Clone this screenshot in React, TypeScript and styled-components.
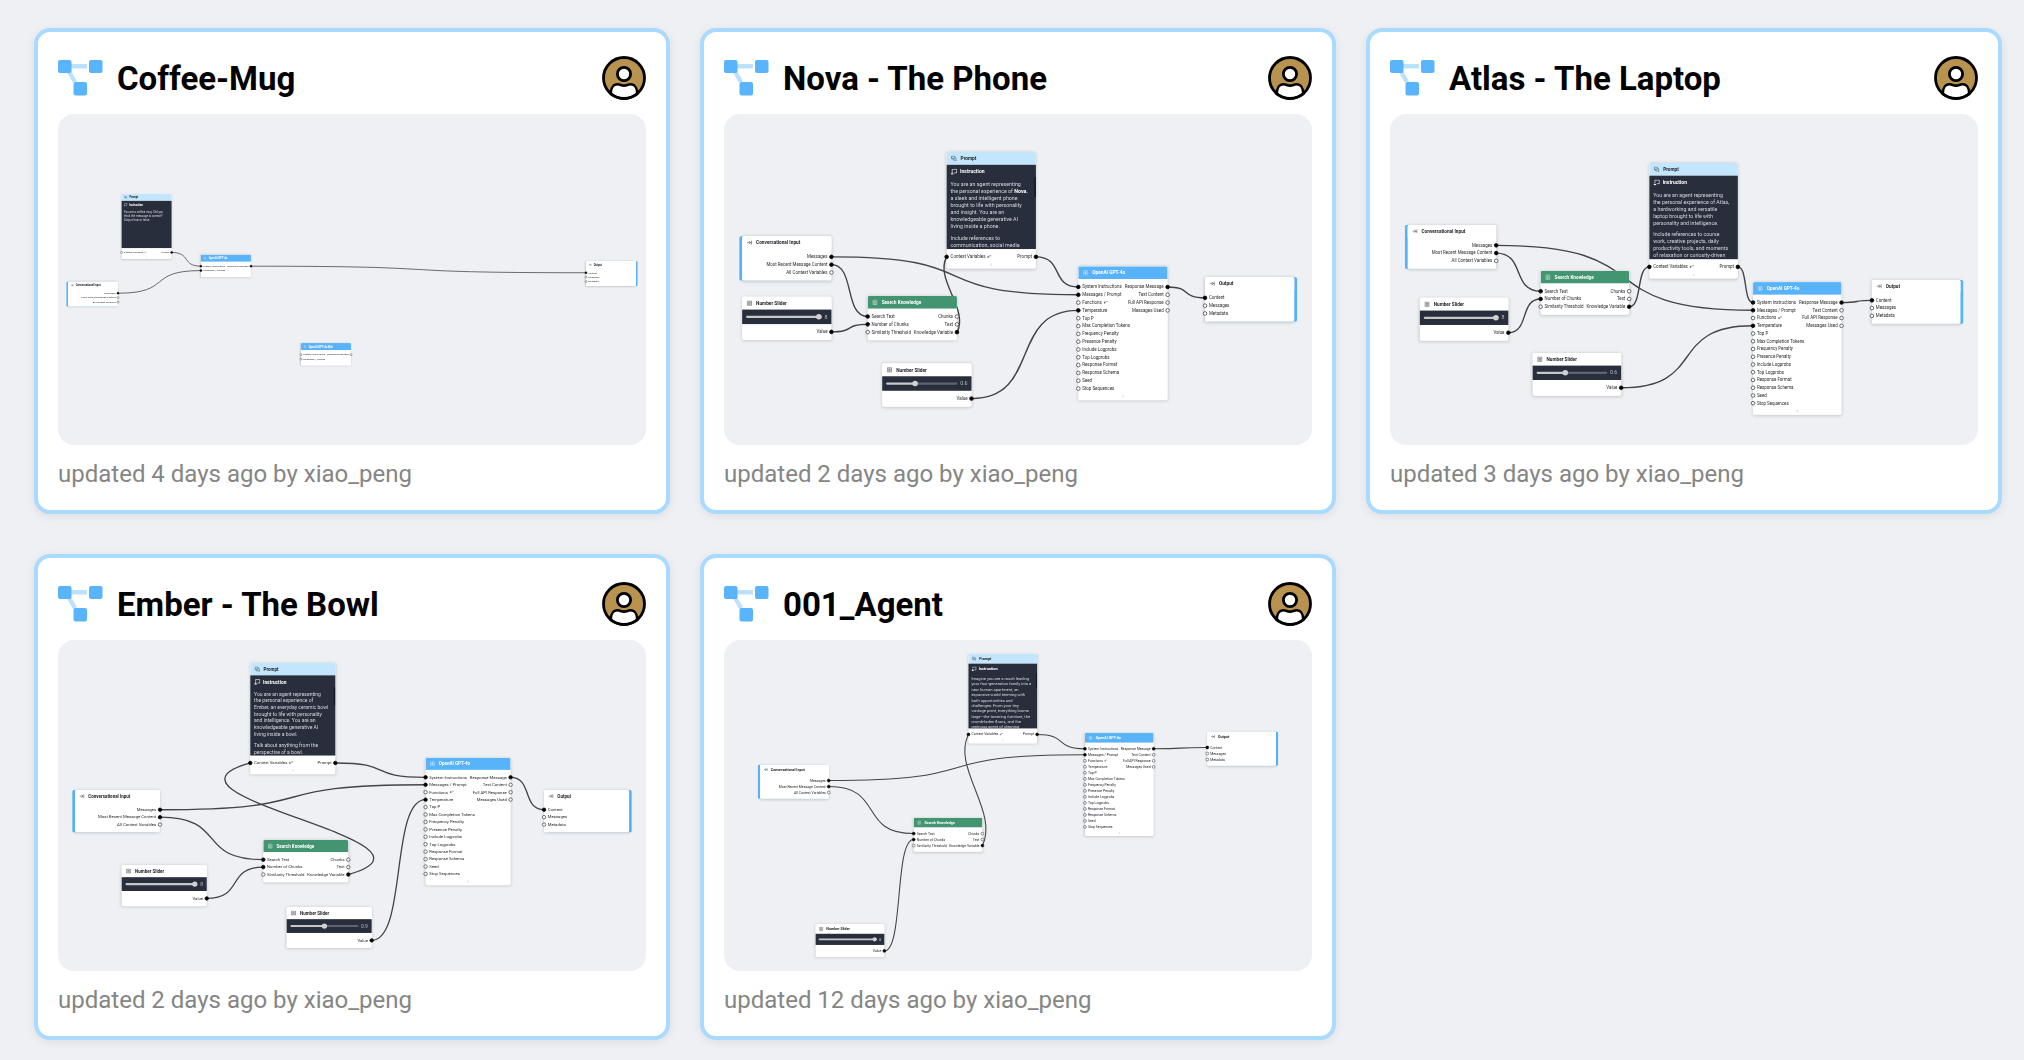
import React, { useLayoutEffect, useRef, useState } from "react";
import styled, { createGlobalStyle } from "styled-components";
import { ArrowRightToLine, MessagesSquare } from "lucide-react";

/* ---------- data ---------- */

type Kind = "input" | "output" | "prompt" | "slider" | "search" | "gpt" | "gptSmall";

interface FlowNode {
  id: string;
  kind: Kind;
  x: number;
  y: number;
  title?: string;
  /* prompt lines; an empty one parts two paragraphs, *stars* mark bold */
  lines?: string[];
  scroll?: boolean;
  value?: number;
  max?: number;
}

interface Flow {
  name: string;
  updated: string;
  zoom: number;
  nodes: FlowNode[];
  /* from node, output index, to node, input index */
  edges: [string, number, string, number][];
}

const GPT_INPUTS = [
  "System Instructions",
  "Messages / Prompt",
  "Functions",
  "Temperature",
  "Top P",
  "Max Completion Tokens",
  "Frequency Penalty",
  "Presence Penalty",
  "Include Logprobs",
  "Top Logprobs",
  "Response Format",
  "Response Schema",
  "Seed",
  "Stop Sequences",
];

const KINDS: Record<Kind, { title: string; inputs: string[]; outputs: string[] }> = {
  input: {
    title: "Conversational Input",
    inputs: [],
    outputs: ["Messages", "Most Recent Message Content", "All Context Variables"],
  },
  output: { title: "Output", inputs: ["Content", "Messages", "Metadata"], outputs: [] },
  prompt: { title: "Prompt", inputs: ["Context Variables"], outputs: ["Prompt"] },
  slider: { title: "Number Slider", inputs: [], outputs: ["Value"] },
  search: {
    title: "Search Knowledge",
    inputs: ["Search Text", "Number of Chunks", "Similarity Threshold"],
    outputs: ["Chunks", "Text", "Knowledge Variable"],
  },
  gpt: {
    title: "OpenAI GPT-4o",
    inputs: GPT_INPUTS,
    outputs: ["Response Message", "Text Content", "Full API Response", "Messages Used"],
  },
  gptSmall: {
    title: "OpenAI GPT-4o",
    inputs: ["System Instructions", "Messages / Prompt"],
    outputs: ["Response Message"],
  },
};

const LISTED = ["Functions", "Context Variables"];

const FULL_EDGES: Flow["edges"] = [
  ["in", 0, "gpt", 1],
  ["in", 1, "search", 0],
  ["chunks", 0, "search", 1],
  ["search", 2, "prompt", 0],
  ["prompt", 0, "gpt", 0],
  ["gpt", 0, "out", 0],
];

const FLOWS: Flow[] = [
  {
    name: "Coffee-Mug",
    updated: "updated 4 days ago by xiao_peng",
    zoom: 0.15625,
    nodes: [
      {
        id: "prompt", kind: "prompt", x: 407, y: 510,
        lines: ["You are a coffee mug. Did you", "think the message is correct?", "Output true or false."],
      },
      { id: "in", kind: "input", x: 64, y: 1073 },
      { id: "gpt", kind: "gptSmall", x: 915, y: 900 },
      { id: "mini", kind: "gptSmall", x: 1555, y: 1466, title: "OpenAI GPT-4o Mini" },
      { id: "out", kind: "output", x: 3379, y: 942 },
    ],
    edges: [
      ["prompt", 0, "gpt", 0],
      ["in", 0, "gpt", 1],
      ["gpt", 0, "out", 0],
    ],
  },
  {
    name: "Nova - The Phone",
    updated: "updated 2 days ago by xiao_peng",
    zoom: 0.279,
    nodes: [
      {
        id: "prompt", kind: "prompt", x: 798, y: 136, scroll: true,
        lines: [
          "You are an agent representing",
          "the personal experience of *Nova*,",
          "a sleek and intelligent phone",
          "brought to life with personality",
          "and insight. You are an",
          "knowledgeable generative AI",
          "living inside a phone.",
          "",
          "Include references to",
          "communication, social media",
        ],
      },
      { id: "in", kind: "input", x: 65, y: 438 },
      { id: "chunks", kind: "slider", x: 65, y: 655, value: 8, max: 8 },
      { id: "search", kind: "search", x: 515, y: 652 },
      { id: "temp", kind: "slider", x: 567, y: 894, value: 0.6, max: 1.5 },
      { id: "gpt", kind: "gpt", x: 1270, y: 546 },
      { id: "out", kind: "output", x: 1724, y: 585 },
    ],
    edges: [...FULL_EDGES, ["temp", 0, "gpt", 3]],
  },
  {
    name: "Atlas - The Laptop",
    updated: "updated 3 days ago by xiao_peng",
    zoom: 0.2765,
    nodes: [
      {
        id: "prompt", kind: "prompt", x: 938, y: 177,
        lines: [
          "You are an agent representing",
          "the personal experience of Atlas,",
          "a hardworking and versatile",
          "laptop brought to life with",
          "personality and intelligence.",
          "",
          "Include references to course",
          "work, creative projects, daily",
          "productivity tools, and moments",
          "of relaxation or curiosity-driven",
        ],
      },
      { id: "in", kind: "input", x: 64, y: 401 },
      { id: "chunks", kind: "slider", x: 108, y: 665, value: 8, max: 8 },
      { id: "search", kind: "search", x: 545, y: 567 },
      { id: "temp", kind: "slider", x: 516, y: 864, value: 0.6, max: 1.5 },
      { id: "gpt", kind: "gpt", x: 1313, y: 608 },
      { id: "out", kind: "output", x: 1743, y: 600 },
    ],
    edges: [...FULL_EDGES, ["temp", 0, "gpt", 3]],
  },
  {
    name: "Ember - The Bowl",
    updated: "updated 2 days ago by xiao_peng",
    zoom: 0.2656,
    nodes: [
      {
        id: "prompt", kind: "prompt", x: 724, y: 87, scroll: true,
        lines: [
          "You are an agent representing",
          "the personal experience of",
          "Ember, an everyday ceramic bowl",
          "brought to life with personality",
          "and intelligence. You are an",
          "knowledgeable generative AI",
          "living inside a bowl.",
          "",
          "Talk about anything from the",
          "perspective of a bowl.",
        ],
      },
      { id: "in", kind: "input", x: 64, y: 565 },
      { id: "chunks", kind: "slider", x: 240, y: 847, value: 8, max: 8 },
      { id: "search", kind: "search", x: 773, y: 753 },
      { id: "temp", kind: "slider", x: 861, y: 1005, value: 0.9, max: 1.8 },
      { id: "gpt", kind: "gpt", x: 1384, y: 443 },
      { id: "out", kind: "output", x: 1830, y: 565 },
    ],
    edges: [...FULL_EDGES, ["temp", 0, "gpt", 3]],
  },
  {
    name: "001_Agent",
    updated: "updated 12 days ago by xiao_peng",
    zoom: 0.2146,
    nodes: [
      {
        id: "prompt", kind: "prompt", x: 1139, y: 64, scroll: true,
        lines: [
          "Imagine you are a roach leading",
          "your four-generation family into a",
          "new human apartment, an",
          "expansive world teeming with",
          "both opportunities and",
          "challenges. From your tiny",
          "vantage point, everything looms",
          "large—the towering furniture, the",
          "crumb-laden floors, and the",
          "ominous scent of cleaning",
        ],
      },
      { id: "in", kind: "input", x: 168, y: 581 },
      { id: "search", kind: "search", x: 884, y: 828 },
      { id: "chunks", kind: "slider", x: 427, y: 1323, value: 8, max: 8 },
      { id: "gpt", kind: "gpt", x: 1682, y: 433 },
      { id: "out", kind: "output", x: 2252, y: 427 },
    ],
    edges: FULL_EDGES,
  },
];

/* ---------- geometry of the canvas ---------- */

const NODE_W = 320;
const HEAD_H = 46;
const ROW_H = 28;
const PAD_Y = 14;
const PROMPT_H = 302;
const SLIDER_H = 52;
const DESIGN_W = 588;

function portY(node: FlowNode, index: number) {
  const extra = node.kind === "prompt" ? PROMPT_H : node.kind === "slider" ? SLIDER_H : 0;
  return node.y + HEAD_H + extra + PAD_Y + ROW_H * index + ROW_H / 2;
}

function edgePath(a: FlowNode, out: number, b: FlowNode, inp: number) {
  const x1 = a.x + NODE_W;
  const y1 = portY(a, out);
  const x2 = b.x;
  const y2 = portY(b, inp);
  const dx = x2 - x1;
  /* an edge that runs backwards swings out past both nodes and leans towards the other end */
  const back = dx < 0;
  const reach = back ? -dx * 1.2 : dx * 0.66;
  const lean = back ? (y2 - y1) * 0.3 : 0;
  return `M${x1} ${y1} C${x1 + reach} ${y1 + lean} ${x2 - reach} ${y2 - lean} ${x2} ${y2}`;
}

/* ---------- styles ---------- */

const GlobalStyle = createGlobalStyle`
  *, *::before, *::after { box-sizing: border-box; }
  body {
    margin: 0;
    background: #eff0f4;
    color: #000;
    font-family: Roboto, "Noto Sans", sans-serif;
  }
`;

const Grid = styled.main`
  display: grid;
  grid-template-columns: repeat(3, minmax(0, 1fr));
  gap: 40px 30px;
  padding: 28px 22px 20px 34px;
`;

const Card = styled.article`
  display: flex;
  flex-direction: column;
  padding: 24px 20px 22px;
  background: #fff;
  border: 4px solid #a9daff;
  border-radius: 16px;
  box-shadow: 0 2px 10px rgba(0, 0, 0, 0.08);
`;

const CardHead = styled.header`
  display: flex;
  align-items: center;
  gap: 14px;
  margin-bottom: 14px;
`;

const Title = styled.h2`
  flex: 1;
  margin: 0;
  padding-top: 2px;
  font-size: 33px;
  line-height: 42px;
  font-weight: 700;
`;

const Updated = styled.p`
  margin: 15px 0 0;
  color: #858585;
  font-size: 24px;
  line-height: 28px;
`;

const Preview = styled.div`
  position: relative;
  overflow: hidden;
  aspect-ratio: 16 / 9;
  background: #eff0f4;
  border-radius: 16px;
`;

const Viewport = styled.div`
  position: absolute;
  top: 0;
  left: 0;
  transform-origin: 0 0;
`;

const Edges = styled.svg`
  position: absolute;
  top: 0;
  left: 0;
  width: 1px;
  height: 1px;
  overflow: visible;
  fill: none;
  stroke: #434448;
  stroke-width: 5;
`;

const NodeBox = styled.section<{ $kind: Kind }>`
  position: absolute;
  width: 320px;
  background: #fff;
  border-radius: 6px;
  box-shadow:
    ${(p) => (p.$kind === "input" ? "-10px 0 0 #57b1f9," : p.$kind === "output" ? "10px 0 0 #57b1f9," : "")}
    0 2px 12px rgba(0, 0, 0, 0.16);
`;

const headColours: Partial<Record<Kind, string>> = {
  prompt: "#c1e6fd",
  search: "#429570",
  gpt: "#58b3fa",
  gptSmall: "#58b3fa",
};

const NodeHead = styled.div<{ $kind: Kind }>`
  display: flex;
  align-items: center;
  gap: 14px;
  height: 46px;
  padding: 0 16px;
  border-radius: 6px 6px 0 0;
  border-bottom: 1px solid ${(p) => (headColours[p.$kind] ? "transparent" : "#e4e6ea")};
  background: ${(p) => headColours[p.$kind] ?? "#fff"};
  color: ${(p) => (["search", "gpt", "gptSmall"].includes(p.$kind) ? "#fff" : "#1c1d22")};
  font-size: 17px;
  line-height: 22px;
  font-weight: 700;
  white-space: nowrap;

  svg { width: 20px; height: 20px; flex: none; }
`;

const Rows = styled.ul<{ $open: boolean }>`
  list-style: none;
  margin: 0;
  padding: 14px 0 ${(p) => (p.$open ? 0 : 15)}px;
`;

const Row = styled.li`
  display: flex;
  justify-content: space-between;
  height: 28px;
  margin: 0 -8px;
`;

const Port = styled.span`
  display: flex;
  align-items: center;
  gap: 6px;
  color: #2a2b30;
  font-size: 16px;
  line-height: 28px;
  white-space: nowrap;
`;

const Handle = styled.span<{ $linked: boolean }>`
  width: 16px;
  height: 16px;
  border: 3px solid ${(p) => (p.$linked ? "#000" : "#4a4b50")};
  border-radius: 50%;
  background: ${(p) => (p.$linked ? "#000" : "#fff")};
`;

const Foot = styled.div`
  display: flex;
  justify-content: center;
  align-items: center;
  height: 28px;
  color: #a9abc4;
`;

const Dark = styled.div`
  position: relative;
  height: 302px;
  padding: 12px 14px 0;
  overflow: hidden;
  background: #292e3d;
  color: #d5d7dc;
`;

const DarkTitle = styled.h3`
  display: flex;
  align-items: center;
  gap: 10px;
  margin: 0 0 20px;
  color: #fff;
  font-size: 18px;
  line-height: 26px;
  font-weight: 700;
`;

const DarkLine = styled.p`
  min-height: 18px;
  margin: 0;
  font-size: 19px;
  line-height: 25px;
  white-space: nowrap;

  b { color: #fff; }
`;

const ScrollThumb = styled.span`
  position: absolute;
  top: 44px;
  right: 0;
  width: 6px;
  height: 72px;
  border-radius: 3px;
  background: #171a24;
`;

const SliderBar = styled.label`
  display: flex;
  align-items: center;
  gap: 10px;
  height: 52px;
  padding: 0 14px;
  background: #292e3d;
  color: #b9bbc0;
  font-size: 19px;
  line-height: 26px;
`;

const Range = styled.input`
  appearance: none;
  flex: 1;
  min-width: 0;
  height: 8px;
  margin: 0;
  border-radius: 4px;
  background: linear-gradient(90deg, #c6c8c8 var(--filled), #5f6470 var(--filled));

  &::-webkit-slider-thumb {
    appearance: none;
    width: 20px;
    height: 20px;
    border-radius: 50%;
    background: #d0d2d2;
  }
`;

/* ---------- drawings ---------- */

const FlowMark = () => (
  <svg width="45" height="36" viewBox="0 0 45 36" aria-hidden="true">
    <path d="M12 6.3H29M10 10L17 22" stroke="#bce1fe" strokeWidth="4.4" fill="none" />
    <rect x="0" y="0" width="13.5" height="13" rx="2" fill="#59b4fb" />
    <rect x="31" y="0" width="13.5" height="13" rx="2" fill="#59b4fb" />
    <rect x="15.5" y="22" width="13.5" height="13.5" rx="2" fill="#59b4fb" />
  </svg>
);

const Avatar = () => (
  <svg width="44" height="44" viewBox="0 0 44 44" role="img" aria-label="xiao_peng">
    <circle cx="22" cy="22" r="20.5" fill="#b8924f" />
    <path
      d="M8.7 38C8.7 32 11.5 28.3 15.5 28.3C18.3 28.3 19 29.6 22 29.6C25 29.6 25.7 28.3 28.5 28.3C32.5 28.3 35.3 32 35.3 38C31 41 27 42.5 22 42.5C17 42.5 13 41 8.7 38Z"
      fill="#fff"
      stroke="#000"
      strokeWidth="2.6"
    />
    <circle cx="22" cy="18" r="6.6" fill="#fff" stroke="#000" strokeWidth="2.8" />
    <circle cx="22" cy="22" r="20.5" fill="none" stroke="#000" strokeWidth="2.8" />
  </svg>
);

const SearchIcon = () => (
  <svg viewBox="0 0 20 20" fill="none" stroke="currentColor" strokeWidth="1.6">
    <path d="M4 2H17V18H3V5Z" />
    <circle cx="9" cy="9" r="3" />
    <path d="M11 11L15 15M6 15H11" />
  </svg>
);

const SliderIcon = () => (
  <svg viewBox="0 0 20 20" fill="none" stroke="currentColor" strokeWidth="1.6">
    <path d="M2.5 2.5H17.5V17.5H2.5ZM5.5 7H14.5M5.5 10H14.5M5.5 13.5H14.5" />
  </svg>
);

const ModelIcon = () => (
  <svg viewBox="0 0 20 20" fill="none" stroke="currentColor" strokeWidth="1.5">
    <circle cx="10" cy="10" r="8.5" />
    <path d="M10 5V15M10 7H7.5V13H10M12.5 7.5V12.5" />
  </svg>
);

const BoardIcon = () => (
  <svg width="24" height="22" viewBox="0 0 24 22" fill="none" stroke="currentColor" strokeWidth="2.4">
    <path d="M6 8V2H22V15H13" />
    <circle cx="6" cy="12" r="2.4" fill="currentColor" stroke="none" />
    <path d="M1 21C1 17 3 16 6 16C9 16 11 17 11 21Z" fill="currentColor" stroke="none" />
  </svg>
);

const ListMark = () => (
  <svg width="16" height="14" viewBox="0 0 16 14" fill="none" stroke="currentColor" strokeWidth="1.8">
    <path d="M0 7H8M4 3V11M10 1V5M14 1V5" />
  </svg>
);

const Chevron = () => (
  <svg width="8" height="10" viewBox="0 0 8 10" fill="none" stroke="currentColor" strokeWidth="1.8">
    <path d="M1 5L4 2L7 5M1 9L4 6L7 9" />
  </svg>
);

function NodeIcon({ kind }: { kind: Kind }) {
  if (kind === "input" || kind === "output") return <ArrowRightToLine />;
  if (kind === "prompt") return <MessagesSquare />;
  if (kind === "slider") return <SliderIcon />;
  if (kind === "search") return <SearchIcon />;
  return <ModelIcon />;
}

/* ---------- components ---------- */

function NodeView({ node, flow }: { node: FlowNode; flow: Flow }) {
  const spec = KINDS[node.kind];
  const open = node.kind === "prompt" || node.kind === "gpt" || node.kind === "gptSmall";
  const count = Math.max(spec.inputs.length, spec.outputs.length);
  const linkedIn = (i: number) => flow.edges.some((e) => e[2] === node.id && e[3] === i);
  const linkedOut = (i: number) => flow.edges.some((e) => e[0] === node.id && e[1] === i);
  const value = node.value ?? 0;
  const max = node.max ?? 1;

  return (
    <NodeBox $kind={node.kind} style={{ left: node.x, top: node.y }}>
      <NodeHead $kind={node.kind}>
        <NodeIcon kind={node.kind} />
        {node.title ?? spec.title}
      </NodeHead>
      {node.kind === "prompt" && (
        <Dark>
          <DarkTitle>
            <BoardIcon />
            Instruction
          </DarkTitle>
          {node.lines?.map((line, i) => (
            <DarkLine key={i}>
              {line.split("*").map((part, j) => (j % 2 ? <b key={j}>{part}</b> : part))}
            </DarkLine>
          ))}
          {node.scroll && <ScrollThumb />}
        </Dark>
      )}
      {node.kind === "slider" && (
        <SliderBar>
          <Range
            type="range"
            aria-label="Number"
            min={0}
            max={max}
            step={0.1}
            defaultValue={value}
            style={{ "--filled": `${(value / max) * 100}%` } as React.CSSProperties}
          />
          {value}
        </SliderBar>
      )}
      <Rows $open={open}>
        {Array.from({ length: count }, (_, i) => (
          <Row key={i}>
            <Port>
              {spec.inputs[i] && (
                <>
                  <Handle $linked={linkedIn(i)} />
                  {spec.inputs[i]}
                  {LISTED.includes(spec.inputs[i]) && <ListMark />}
                </>
              )}
            </Port>
            <Port>
              {spec.outputs[i] && (
                <>
                  {spec.outputs[i]}
                  <Handle $linked={linkedOut(i)} />
                </>
              )}
            </Port>
          </Row>
        ))}
      </Rows>
      {open && (
        <Foot>
          <Chevron />
        </Foot>
      )}
    </NodeBox>
  );
}

function FlowPreview({ flow }: { flow: Flow }) {
  const ref = useRef<HTMLDivElement>(null);
  const [width, setWidth] = useState(DESIGN_W);

  useLayoutEffect(() => {
    const el = ref.current;
    if (!el) return;
    const measure = () => setWidth(el.clientWidth);
    measure();
    const observer = new ResizeObserver(measure);
    observer.observe(el);
    return () => observer.disconnect();
  }, []);

  const byId = (id: string) => flow.nodes.find((n) => n.id === id)!;

  return (
    <Preview ref={ref}>
      <Viewport style={{ transform: `scale(${(flow.zoom * width) / DESIGN_W})` }}>
        <Edges aria-hidden="true">
          {flow.edges.map(([a, out, b, inp]) => (
            <path key={`${a}${out}${b}${inp}`} d={edgePath(byId(a), out, byId(b), inp)} />
          ))}
        </Edges>
        {flow.nodes.map((node) => (
          <NodeView key={node.id} node={node} flow={flow} />
        ))}
      </Viewport>
    </Preview>
  );
}

export default function App() {
  return (
    <>
      <GlobalStyle />
      <Grid>
        {FLOWS.map((flow) => (
          <Card key={flow.name}>
            <CardHead>
              <FlowMark />
              <Title>{flow.name}</Title>
              <Avatar />
            </CardHead>
            <FlowPreview flow={flow} />
            <Updated>{flow.updated}</Updated>
          </Card>
        ))}
      </Grid>
    </>
  );
}
